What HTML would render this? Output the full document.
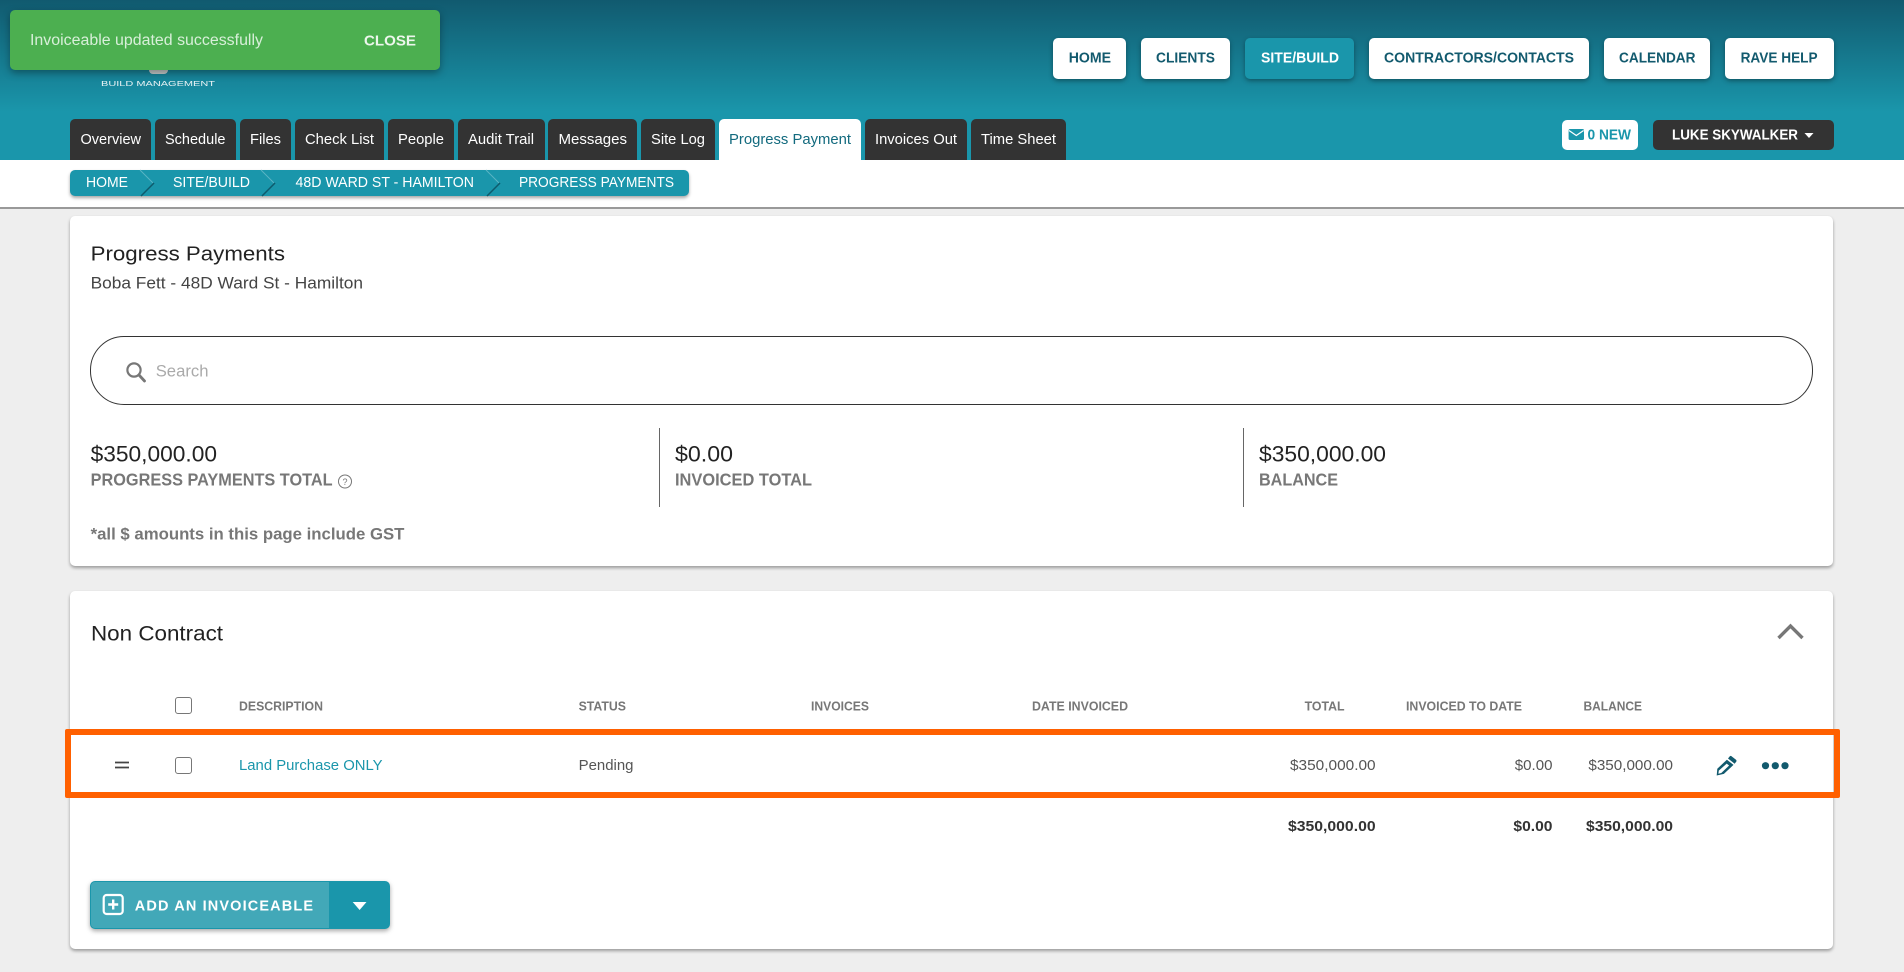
<!DOCTYPE html>
<html lang="en"><head><meta charset="utf-8"><title>Progress Payments</title>
<style>
html,body{margin:0;padding:0;width:1904px;height:972px;overflow:hidden;background:#eee;font-family:"Liberation Sans",sans-serif}
.a{position:absolute;box-sizing:border-box}
.hdr{left:0;top:0;width:1904px;height:160px;background:linear-gradient(#115a6f 0,#1a96ab 112px,#1a96ab 160px)}
.band{left:0;top:160px;width:1904px;height:49px;background:#fff;border-bottom:2px solid #999}
.tab{top:119px;height:41px;background:#333;border-radius:5px 5px 0 0}
.nav{top:38px;height:41px;background:#fff;border-radius:5px;box-shadow:0 2px 5px rgba(0,0,0,.35)}
.card{background:#fff;border-radius:5px;box-shadow:0 2px 3px rgba(0,0,0,.35)}
.toast{left:10px;top:10px;width:430px;height:60px;background:#4caf50;border-radius:5px;box-shadow:0 3px 8px rgba(0,0,0,.35)}
.crumb{left:70px;top:170px;width:619px;height:26px;background:#1a96ab;border-radius:5px;box-shadow:0 2px 3px rgba(0,0,0,.35);overflow:hidden}
svg{position:absolute;left:0;top:0}
text{font-family:"Liberation Sans",sans-serif}
</style></head><body>
<div class="a hdr"></div>
<div class="a band"></div>
<div class="a" style="left:149px;top:70px;width:19px;height:4px;background:#c4c8c8;border-radius:0 0 10px 10px"></div>
<div class="a tab" style="left:70px;width:81px"></div>
<div class="a tab" style="left:155px;width:81px"></div>
<div class="a tab" style="left:240px;width:51px"></div>
<div class="a tab" style="left:295px;width:89px"></div>
<div class="a tab" style="left:388px;width:66px"></div>
<div class="a tab" style="left:458px;width:87px"></div>
<div class="a tab" style="left:548px;width:89px"></div>
<div class="a tab" style="left:641px;width:74px"></div>
<div class="a tab" style="left:719px;width:142px;background:#fff"></div>
<div class="a tab" style="left:865px;width:102px"></div>
<div class="a tab" style="left:971px;width:95px"></div>
<div class="a nav" style="left:1053px;width:73px"></div>
<div class="a nav" style="left:1141px;width:89px"></div>
<div class="a nav" style="left:1245px;width:109px;background:#1a96ab"></div>
<div class="a nav" style="left:1369px;width:220px"></div>
<div class="a nav" style="left:1604px;width:106px"></div>
<div class="a nav" style="left:1725px;width:109px"></div>
<div class="a" style="left:1562px;top:120px;width:76px;height:30px;background:#fff;border-radius:5px"></div>
<div class="a" style="left:1653px;top:120px;width:181px;height:30px;background:#333;border-radius:5px"></div>
<div class="a crumb"></div>
<div class="a card" style="left:70px;top:216px;width:1763px;height:350px"></div>
<div class="a" style="left:90px;top:336px;width:1723px;height:69px;border:1px solid #333;border-radius:34px;background:#fff"></div>
<div class="a" style="left:659px;top:428px;width:1px;height:79px;background:#666"></div>
<div class="a" style="left:1243px;top:428px;width:1px;height:79px;background:#666"></div>
<div class="a card" style="left:70px;top:591px;width:1763px;height:358px"></div>
<div class="a" style="left:175px;top:697px;width:17px;height:17px;border:1.5px solid #777;border-radius:3px"></div>
<div class="a" style="left:175px;top:757px;width:17px;height:17px;border:1.5px solid #777;border-radius:3px"></div>
<div class="a" style="left:65px;top:729px;width:1775px;height:69px;border:6px solid #ff6000;border-radius:2px"></div>
<div class="a" style="left:90px;top:881px;width:300px;height:48px;background:#1a96ab;border-radius:5px;box-shadow:0 2px 5px rgba(0,0,0,.35)"></div>
<div class="a" style="left:91px;top:882px;width:238px;height:46px;background:#42a8b8;border-radius:4px 0 0 4px"></div>
<div class="a toast"></div>
<svg width="1904" height="972" viewBox="0 0 1904 972" xmlns="http://www.w3.org/2000/svg">
<g font-size="7.5" fill="#e8f2f4"><text x="101" y="86" textLength="114" lengthAdjust="spacingAndGlyphs">BUILD MANAGEMENT</text></g>
<g font-size="15" fill="#fff" font-weight="400">
<text x="30" y="45" font-size="15.5" fill="#d8efd9" textLength="233" lengthAdjust="spacingAndGlyphs">Invoiceable updated successfully</text>
<text x="80.5" y="144" textLength="60.5" lengthAdjust="spacingAndGlyphs">Overview</text>
<text x="165" y="144" textLength="60.5" lengthAdjust="spacingAndGlyphs">Schedule</text>
<text x="250" y="144" textLength="31" lengthAdjust="spacingAndGlyphs">Files</text>
<text x="305" y="144" textLength="69" lengthAdjust="spacingAndGlyphs">Check List</text>
<text x="398" y="144" textLength="46" lengthAdjust="spacingAndGlyphs">People</text>
<text x="468" y="144" textLength="66" lengthAdjust="spacingAndGlyphs">Audit Trail</text>
<text x="558.5" y="144" textLength="68.5" lengthAdjust="spacingAndGlyphs">Messages</text>
<text x="651" y="144" textLength="54" lengthAdjust="spacingAndGlyphs">Site Log</text>
<text x="729" y="144" fill="#126a7e" textLength="122" lengthAdjust="spacingAndGlyphs">Progress Payment</text>
<text x="875" y="144" textLength="82" lengthAdjust="spacingAndGlyphs">Invoices Out</text>
<text x="981" y="144" textLength="75" lengthAdjust="spacingAndGlyphs">Time Sheet</text>
<text x="86" y="187" textLength="42" lengthAdjust="spacingAndGlyphs">HOME</text>
<text x="173" y="187" textLength="77" lengthAdjust="spacingAndGlyphs">SITE/BUILD</text>
<text x="295.5" y="187" textLength="178.5" lengthAdjust="spacingAndGlyphs">48D WARD ST - HAMILTON</text>
<text x="519" y="187" textLength="155" lengthAdjust="spacingAndGlyphs">PROGRESS PAYMENTS</text>
</g>
<g font-size="15" font-weight="700" fill="#ecf6ec"><text x="364" y="45.5" textLength="52" lengthAdjust="spacingAndGlyphs">CLOSE</text></g>
<g font-size="14.5" font-weight="700" fill="#125a6e">
<text x="1068.7" y="62.5" textLength="42.3" lengthAdjust="spacingAndGlyphs">HOME</text>
<text x="1156" y="62.5" textLength="59" lengthAdjust="spacingAndGlyphs">CLIENTS</text>
<text x="1261" y="62.5" fill="#fff" textLength="78" lengthAdjust="spacingAndGlyphs">SITE/BUILD</text>
<text x="1384" y="62.5" textLength="190" lengthAdjust="spacingAndGlyphs">CONTRACTORS/CONTACTS</text>
<text x="1619" y="62.5" textLength="76.5" lengthAdjust="spacingAndGlyphs">CALENDAR</text>
<text x="1740.6" y="62.5" textLength="77" lengthAdjust="spacingAndGlyphs">RAVE HELP</text>
<text x="1587.5" y="139.5" fill="#1a96ab" textLength="43.5" lengthAdjust="spacingAndGlyphs">0 NEW</text>
<text x="1672" y="139.5" fill="#fff" textLength="126" lengthAdjust="spacingAndGlyphs">LUKE SKYWALKER</text>
</g>
<path d="M1804.5 133h9l-4.5 5z" fill="#fff"/>
<rect x="1568.6" y="129" width="15.4" height="11" rx="1.5" fill="#1a96ab"/><path d="M1569 130.5l7.3 5 7.3-5" fill="none" stroke="#fff" stroke-width="1.2"/>
<g fill="none" stroke-width="1">
<path d="M140 170l13 13" stroke="#5ab4c4"/><path d="M141 196l13-13" stroke="#0e5a6c" stroke-width="1.5"/>
<path d="M261 170l13 13" stroke="#5ab4c4"/><path d="M262 196l13-13" stroke="#0e5a6c" stroke-width="1.5"/>
<path d="M486 170l13 13" stroke="#5ab4c4"/><path d="M487 196l13-13" stroke="#0e5a6c" stroke-width="1.5"/>
</g>
<text x="90.6" y="260.7" font-size="20.5" fill="#222" textLength="194.4" lengthAdjust="spacingAndGlyphs">Progress Payments</text>
<text x="90.6" y="288.5" font-size="17" fill="#444" textLength="272.4" lengthAdjust="spacingAndGlyphs">Boba Fett - 48D Ward St - Hamilton</text>
<circle cx="134" cy="370" r="6.6" fill="none" stroke="#777" stroke-width="2.2"/><path d="M139 375l5.5 6" stroke="#777" stroke-width="2.8" stroke-linecap="round"/>
<text x="155.7" y="376.7" font-size="17" fill="#aaa" textLength="52.8" lengthAdjust="spacingAndGlyphs">Search</text>
<g font-size="22.5" fill="#222">
<text x="90.6" y="461.7" textLength="126.4" lengthAdjust="spacingAndGlyphs">$350,000.00</text>
<text x="675" y="461.7" textLength="58" lengthAdjust="spacingAndGlyphs">$0.00</text>
<text x="1259" y="461.7" textLength="127" lengthAdjust="spacingAndGlyphs">$350,000.00</text>
</g>
<g font-size="17.5" font-weight="700" fill="#777">
<text x="90.6" y="485.5" textLength="242" lengthAdjust="spacingAndGlyphs">PROGRESS PAYMENTS TOTAL</text>
<text x="675" y="485.5" textLength="137" lengthAdjust="spacingAndGlyphs">INVOICED TOTAL</text>
<text x="1259" y="485.5" textLength="79" lengthAdjust="spacingAndGlyphs">BALANCE</text>
<text x="90.6" y="539.5" font-size="17" textLength="313.8" lengthAdjust="spacingAndGlyphs">*all $ amounts in this page include GST</text>
</g>
<circle cx="345" cy="481.5" r="6.5" fill="none" stroke="#777"/><text x="342.5" y="485" font-size="9" fill="#777">?</text>
<text x="91" y="640.7" font-size="21" fill="#222" textLength="132" lengthAdjust="spacingAndGlyphs">Non Contract</text>
<path d="M1778.5 638l12-12 12 12" fill="none" stroke="#777" stroke-width="3.4"/>
<g font-size="12.5" font-weight="700" fill="#777">
<text x="239" y="710.7" textLength="84" lengthAdjust="spacingAndGlyphs">DESCRIPTION</text>
<text x="578.6" y="710.7" textLength="47.4" lengthAdjust="spacingAndGlyphs">STATUS</text>
<text x="811" y="710.7" textLength="58" lengthAdjust="spacingAndGlyphs">INVOICES</text>
<text x="1032" y="710.7" textLength="96" lengthAdjust="spacingAndGlyphs">DATE INVOICED</text>
<text x="1304.6" y="710.7" textLength="40" lengthAdjust="spacingAndGlyphs">TOTAL</text>
<text x="1406" y="710.7" textLength="116" lengthAdjust="spacingAndGlyphs">INVOICED TO DATE</text>
<text x="1583.5" y="710.7" textLength="58.5" lengthAdjust="spacingAndGlyphs">BALANCE</text>
</g>
<path d="M115 762.5h14M115 767.5h14" stroke="#444" stroke-width="1.8"/>
<g font-size="15" fill="#555">
<text x="239" y="770" fill="#1a96ab" textLength="143.6" lengthAdjust="spacingAndGlyphs">Land Purchase ONLY</text>
<text x="578.6" y="770" textLength="54.9" lengthAdjust="spacingAndGlyphs">Pending</text>
<text x="1290" y="770" textLength="85.6" lengthAdjust="spacingAndGlyphs">$350,000.00</text>
<text x="1514.8" y="770" textLength="37.7" lengthAdjust="spacingAndGlyphs">$0.00</text>
<text x="1588.4" y="770" textLength="84.6" lengthAdjust="spacingAndGlyphs">$350,000.00</text>
</g>
<g font-size="15" font-weight="700" fill="#333">
<text x="1288" y="831" textLength="87.6" lengthAdjust="spacingAndGlyphs">$350,000.00</text>
<text x="1513.4" y="831" textLength="39.1" lengthAdjust="spacingAndGlyphs">$0.00</text>
<text x="1586" y="831" textLength="87" lengthAdjust="spacingAndGlyphs">$350,000.00</text>
</g>
<path d="M1731.2 756l4.8 3.8c.6.5.7 1.3.2 1.9l-1.6 2-6.6-5.2 1.6-2c.5-.6 1.1-.9 1.6-.5zM1726.9 759.7l6.6 5.2-9.6 9-7.2 1.6.6-6.8zM1718.8 770.6l-.4 3.1 2.9-.7 7.8-7.5-2.4-1.9z" fill="#125a6e" fill-rule="evenodd"/>
<g fill="#125a6e"><circle cx="1765.5" cy="765.7" r="3.6"/><circle cx="1775.3" cy="765.7" r="3.6"/><circle cx="1785" cy="765.7" r="3.6"/></g>
<rect x="103.7" y="895" width="19" height="19" rx="3" fill="none" stroke="#fff" stroke-width="2.2"/><path d="M113.2 899.5v10M108.2 904.5h10" stroke="#fff" stroke-width="2.4"/>
<text x="134.8" y="910.7" font-size="14.5" font-weight="700" fill="#fff" textLength="178.2" lengthAdjust="spacing">ADD AN INVOICEABLE</text>
<path d="M352.7 902h13.8l-6.9 8z" fill="#fff"/>
</svg>
</body></html>
